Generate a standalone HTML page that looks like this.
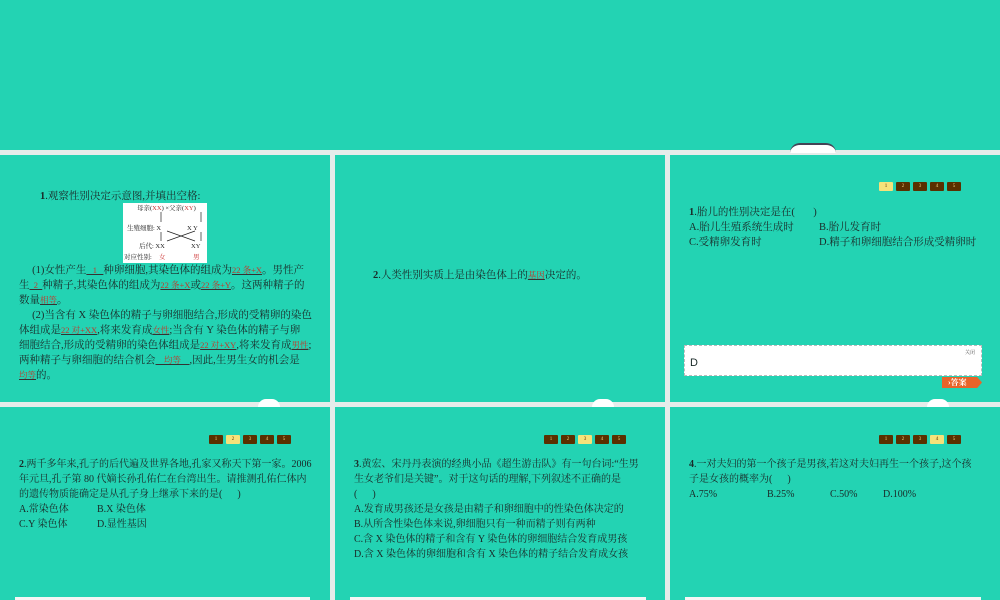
<!DOCTYPE html><html><head><meta charset="utf-8"><style>
*{margin:0;padding:0;box-sizing:border-box}
body{width:1000px;height:600px;background:#e6ecea;position:relative;overflow:hidden;font-family:"Liberation Serif","Noto Serif CJK SC",serif;color:#1a2a28;font-size:10.5px}
.p{position:absolute;background:#23d3b3}
.t{position:absolute;white-space:nowrap;line-height:15px}
.s{font-size:10px}
.u{color:#c0392b;text-decoration:underline;text-decoration-color:#333;font-size:8.5px}
.nav{position:absolute;display:flex;gap:3px}
.nav span{width:14px;height:9px;background:#5a3000;color:#f0d080;font-size:5px;text-align:center;line-height:9px;border-radius:1px}
.nav span.a{background:#f6e27a;color:#5a3000}
.wl{position:absolute;height:3px;background:#f4f6f5;bottom:0}
.bump{position:absolute;width:22px;height:8px;background:#fff;border-radius:11px 11px 0 0}
</style></head><body>
<div class="p" style="left:0;top:0;width:1000px;height:150px"></div>
<div class="bump" style="left:790px;top:143px;width:46px;height:10px;border-radius:23px 23px 0 0;border-top:2px solid #445"></div>
<div class="p" style="left:0;top:155px;width:330px;height:247px"></div>
<div class="p" style="left:335px;top:155px;width:330px;height:247px"></div>
<div class="p" style="left:670px;top:155px;width:330px;height:247px"></div>
<div class="p" style="left:0;top:407px;width:330px;height:193px"></div>
<div class="p" style="left:335px;top:407px;width:330px;height:193px"></div>
<div class="p" style="left:670px;top:407px;width:330px;height:193px"></div>
<div class="bump" style="left:258px;top:399px"></div>
<div class="bump" style="left:592px;top:399px"></div>
<div class="bump" style="left:927px;top:399px"></div>
<div class="wl" style="left:15px;width:295px"></div>
<div class="wl" style="left:350px;width:296px"></div>
<div class="wl" style="left:685px;width:296px"></div>

<div class="t" style="left:40px;top:189px"><b>1</b>.观察性别决定示意图,并填出空格:</div>
<svg style="position:absolute;left:123px;top:203px" width="84" height="60"><rect width="84" height="60" fill="#fff"/>
<g font-size="6.5" fill="#222" font-family="Liberation Serif,Noto Serif CJK SC,serif">
<text x="14" y="7">母亲(<tspan fill="#c33">XX</tspan>) ×父亲(<tspan fill="#c33">XY</tspan>)</text>
<text x="4" y="27">生殖细胞: X</text><text x="64" y="27">X  Y</text>
<text x="16" y="45">后代: XX</text><text x="68" y="45">XY</text>
<text x="1" y="56">对应性别:</text><text x="36" y="56" fill="#c33">女</text><text x="70" y="56" fill="#c33">男</text></g>
<g stroke="#222" stroke-width=".7"><line x1="38" y1="9" x2="38" y2="19"/><line x1="78" y1="9" x2="78" y2="19"/><line x1="38" y1="29" x2="38" y2="38"/><line x1="78" y1="29" x2="78" y2="38"/><line x1="44" y1="28" x2="72" y2="38"/><line x1="72" y1="28" x2="44" y2="38"/></g></svg>
<div class="t" style="left:19px;top:263px">&nbsp;&nbsp;&nbsp;&nbsp;&nbsp;(1)女性产生<span class="u">&nbsp;&nbsp;&nbsp;1&nbsp;&nbsp;&nbsp;</span>种卵细胞,其染色体的组成为<span class="u">22 条+X</span>。男性产<br>生<span class="u">&nbsp;&nbsp;2&nbsp;&nbsp;</span>种精子,其染色体的组成为<span class="u">22 条+X</span>或<span class="u">22 条+Y</span>。这两种精子的<br>数量<span class="u">相等</span>。<br>&nbsp;&nbsp;&nbsp;&nbsp;&nbsp;(2)当含有 X 染色体的精子与卵细胞结合,形成的受精卵的染色<br>体组成是<span class="u">22 对+XX</span>,将来发育成<span class="u">女性</span>;当含有 Y 染色体的精子与卵<br>细胞结合,形成的受精卵的染色体组成是<span class="u">22 对+XY</span>,将来发育成<span class="u">男性</span>;<br>两种精子与卵细胞的结合机会<span class="u">&nbsp;&nbsp;&nbsp;&nbsp;均等&nbsp;&nbsp;&nbsp;&nbsp;</span>,因此,生男生女的机会是<br><span class="u">均等</span>的。</div>

<div class="t" style="left:373px;top:268px"><b>2</b>.人类性别实质上是由染色体上的<span class="u">基因</span>决定的。</div>

<div class="nav" style="left:879px;top:182px"><span class="a">1</span><span>2</span><span>3</span><span>4</span><span>5</span></div>
<div class="t" style="left:689px;top:205px"><b>1</b>.胎儿的性别决定是在(&nbsp;&nbsp;&nbsp;&nbsp;&nbsp;&nbsp;&nbsp;)</div>
<div class="t" style="left:689px;top:220px">A.胎儿生殖系统生成时</div><div class="t" style="left:819px;top:220px">B.胎儿发育时</div>
<div class="t" style="left:689px;top:235px">C.受精卵发育时</div><div class="t" style="left:819px;top:235px">D.精子和卵细胞结合形成受精卵时</div>
<div style="position:absolute;left:684px;top:345px;width:298px;height:31px;background:#fff;border:1px dashed #bbb"></div>
<div class="t" style="left:965px;top:346px;font-size:5px;color:#555">关闭</div>
<div class="t" style="left:690px;top:356px;font-family:'Liberation Sans',sans-serif;font-size:11px">D</div>
<div style="position:absolute;left:942px;top:377px;width:40px;height:11px;background:#e8642a;clip-path:polygon(0 0,88% 0,100% 50%,88% 100%,0 100%);color:#fff;font-size:8px;line-height:11px;padding-left:6px;font-weight:bold">›答案</div>

<div class="nav" style="left:209px;top:435px"><span>1</span><span class="a">2</span><span>3</span><span>4</span><span>5</span></div>
<div class="t s" style="left:19px;top:457px"><b>2</b>.两千多年来,孔子的后代遍及世界各地,孔家又称天下第一家。2006<br>年元旦,孔子第 80 代嫡长孙孔佑仁在台湾出生。请推测孔佑仁体内<br>的遗传物质能确定是从孔子身上继承下来的是(&nbsp;&nbsp;&nbsp;&nbsp;&nbsp;&nbsp;)</div>
<div class="t s" style="left:19px;top:502px">A.常染色体</div><div class="t s" style="left:97px;top:502px">B.X 染色体</div>
<div class="t s" style="left:19px;top:517px">C.Y 染色体</div><div class="t s" style="left:97px;top:517px">D.显性基因</div>

<div class="nav" style="left:544px;top:435px"><span>1</span><span>2</span><span class="a">3</span><span>4</span><span>5</span></div>
<div class="t s" style="left:354px;top:457px"><b>3</b>.黄宏、宋丹丹表演的经典小品《超生游击队》有一句台词:“生男<br>生女老爷们是关键”。对于这句话的理解,下列叙述不正确的是<br>(&nbsp;&nbsp;&nbsp;&nbsp;&nbsp;&nbsp;)<br>A.发育成男孩还是女孩是由精子和卵细胞中的性染色体决定的<br>B.从所含性染色体来说,卵细胞只有一种而精子则有两种<br>C.含 X 染色体的精子和含有 Y 染色体的卵细胞结合发育成男孩<br>D.含 X 染色体的卵细胞和含有 X 染色体的精子结合发育成女孩</div>

<div class="nav" style="left:879px;top:435px"><span>1</span><span>2</span><span>3</span><span class="a">4</span><span>5</span></div>
<div class="t s" style="left:689px;top:457px"><b>4</b>.一对夫妇的第一个孩子是男孩,若这对夫妇再生一个孩子,这个孩<br>子是女孩的概率为(&nbsp;&nbsp;&nbsp;&nbsp;&nbsp;&nbsp;)</div>
<div class="t s" style="left:689px;top:487px">A.75%</div><div class="t s" style="left:767px;top:487px">B.25%</div><div class="t s" style="left:830px;top:487px">C.50%</div><div class="t s" style="left:883px;top:487px">D.100%</div>
</body></html>
